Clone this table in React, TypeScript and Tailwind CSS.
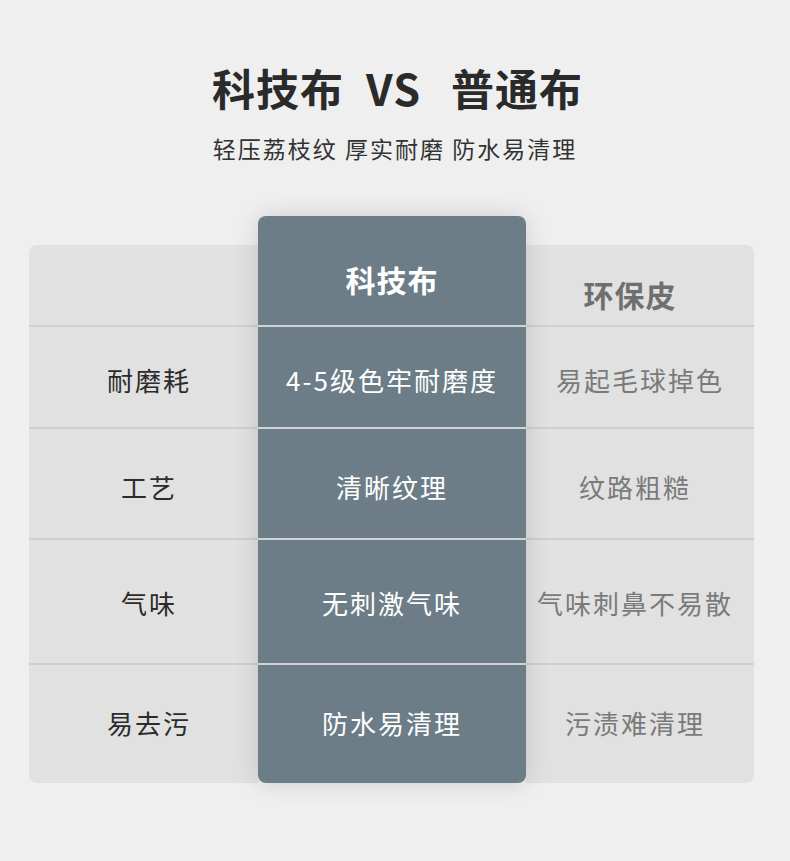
import React from "react";

const rows = [
  { h: "h-[100px]", l: "耐磨耗", m: "4-5级色牢耐磨度", r: "易起毛球掉色", pt: "pt-[4px]", rp: "pr-[0px]" },
  { h: "h-[109px]", l: "工艺", m: "清晰纹理", r: "纹路粗糙", pt: "pt-[6px]", rp: "pr-[10px]" },
  { h: "h-[123px]", l: "气味", m: "无刺激气味", r: "气味刺鼻不易散", pt: "pt-[1px]", rp: "pr-[10px]" },
  { h: "h-[118px]", l: "易去污", m: "防水易清理", r: "污渍难清理", pt: "pt-[0px] pb-[4px]", rp: "pr-[10px]" },
];

const font = { fontFamily: '"Noto Sans CJK SC", "Noto Sans", sans-serif' };

export default function App() {
  return (
    <div className="w-[790px] h-[861px] bg-[#efefef] overflow-hidden" style={font}>
      <div className="pt-[57px] pl-[5px] flex justify-center items-center text-[43px] font-bold text-[#2a2a2a] leading-[60px]">
        <span className="tracking-[1px]">科技布</span>
        <span className="ml-[22px] mr-[30px] tracking-[1px]">VS</span>
        <span className="tracking-[1px]">普通布</span>
      </div>
      <div className="mt-[15px] text-center text-[23px] tracking-[2px] text-[#333] leading-[32px]">
        轻压荔枝纹 厚实耐磨 防水易清理
      </div>
      <div className="mt-[52px] ml-[29px] flex items-start">
        {/* left */}
        <div className="w-[229px] mt-[29px] bg-[#e1e1e1] rounded-l-[8px] flex flex-col">
          <div className="h-[80px]" />
          {rows.map((r, i) => (
            <React.Fragment key={i}>
              <div className="h-[2px] bg-[#cfcfcf]" />
              <div className={`${r.h} ${r.pt} flex items-center justify-center pl-[11px] text-[26px] tracking-[2px] text-[#2b2b2b]`}>
                {r.l}
              </div>
            </React.Fragment>
          ))}
        </div>
        {/* middle */}
        <div className="relative z-10 w-[268px] bg-[#6c7d87] rounded-[8px] shadow-[0_0_24px_rgba(0,0,0,0.14)] flex flex-col">
          <div className="h-[109px] flex items-center justify-center pt-[17px] text-[30px] tracking-[1px] font-bold text-white">
            科技布
          </div>
          {rows.map((r, i) => (
            <React.Fragment key={i}>
              <div className="h-[2px] bg-[#d2d2d2]" />
              <div className={`${r.h} ${r.pt} flex items-center justify-center text-[26px] tracking-[2px] text-white whitespace-nowrap`}>
                {r.m}
              </div>
            </React.Fragment>
          ))}
        </div>
        {/* right */}
        <div className="w-[228px] mt-[29px] bg-[#e1e1e1] rounded-r-[8px] flex flex-col">
          <div className="h-[80px] flex items-center justify-center pt-[18px] pr-[20px] text-[30px] tracking-[1px] font-bold text-[#6f6f6f]">
            环保皮
          </div>
          {rows.map((r, i) => (
            <React.Fragment key={i}>
              <div className="h-[2px] bg-[#cfcfcf]" />
              <div className={`${r.h} ${r.pt} ${r.rp} flex items-center justify-center text-[26px] tracking-[2px] text-[#7a7a7a] whitespace-nowrap`}>
                {r.r}
              </div>
            </React.Fragment>
          ))}
        </div>
      </div>
    </div>
  );
}
